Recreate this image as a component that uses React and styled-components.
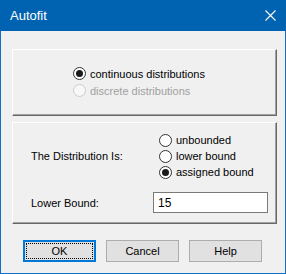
import React from "react";
import styled, { createGlobalStyle } from "styled-components";

const GlobalStyle = createGlobalStyle`
  html, body {
    margin: 0;
    padding: 0;
    background: #f0f0f0;
  }
  * {
    box-sizing: border-box;
  }
`;

const Window = styled.div`
  width: 286px;
  height: 274px;
  border: 1px solid #1170c4;
  border-top: none;
  background: #f0f0f0;
  font-family: "Liberation Sans", Arial, sans-serif;
  font-size: 11px;
  color: #000;
  display: flex;
  flex-direction: column;
`;

const TitleBar = styled.div`
  height: 31px;
  margin: 0 -1px;
  background: #0063b1;
  color: #fff;
  display: flex;
  align-items: center;
  justify-content: space-between;
  padding: 0 10px 0 10px;
`;

const Title = styled.span`
  font-size: 13px;
  line-height: 1;
  padding-bottom: 1px;
`;

const Body = styled.div`
  flex: 1;
  padding: 18px 0 0 11px;
  display: flex;
  flex-direction: column;
`;

// raised group box: light top/left, dark bottom/right
const Panel = styled.div`
  width: 265px;
  height: ${(p) => p.$h}px;
  border-top: 1px solid #fff;
  border-left: 1px solid #fff;
  border-right: 1px solid #696969;
  border-bottom: 1px solid #696969;
  box-shadow: inset -1px -1px 0 #a0a0a0;
  margin-bottom: ${(p) => p.$mb || 0}px;
`;

const ModePanel = styled(Panel)`
  padding: 15px 0 0 60px;
`;

const BoundPanel = styled(Panel)`
  padding: 9px 0 0 18px;
  display: grid;
  grid-template-columns: 122px 115px;
  grid-template-rows: 48px 21px;
  row-gap: 12px;
  align-items: center;
`;

const RadioList = styled.div`
  display: flex;
  flex-direction: column;
  margin-left: ${(p) => p.$indent || 0}px;
`;

const RadioRow = styled.div`
  height: ${(p) => p.$h || 16}px;
  display: flex;
  align-items: center;
  gap: 4px;
  color: ${(p) => (p.$disabled ? "#a0a0a0" : "#000")};
  white-space: nowrap;
`;

const RadioCircle = styled.span`
  width: 13px;
  height: 13px;
  border-radius: 50%;
  border: 1px solid ${(p) => (p.$disabled ? "#cccccc" : "#333")};
  background: ${(p) => (p.$disabled ? "#f7f7f7" : "#fff")};
  display: flex;
  align-items: center;
  justify-content: center;
  flex: none;

  &::after {
    content: "";
    width: 7px;
    height: 7px;
    border-radius: 50%;
    background: #1a1a1a;
    display: ${(p) => (p.$checked ? "block" : "none")};
  }
`;

const Label = styled.span`
  color: #000;
  white-space: nowrap;
`;

const TextBox = styled.div`
  width: 115px;
  height: 21px;
  border: 1px solid #7a7a7a;
  background: #fff;
  display: flex;
  align-items: center;
  padding-left: 4px;
  font-size: 12px;
`;

const ButtonRow = styled.div`
  display: flex;
  gap: 10px;
  padding-left: 11px;
  margin-top: 16px;
`;

const Button = styled.div`
  position: relative;
  width: 73px;
  height: 22px;
  background: #e1e1e1;
  border: ${(p) => (p.$default ? "2px solid #0078d7" : "1px solid #adadad")};
  display: flex;
  align-items: center;
  justify-content: center;
  font-size: 11px;

  &::after {
    content: "";
    position: absolute;
    inset: 1px;
    border: 1px dotted #000;
    display: ${(p) => (p.$default ? "block" : "none")};
  }
`;

const Radio = ({ label, checked, disabled, h }) => (
  <RadioRow $disabled={disabled} $h={h}>
    <RadioCircle $checked={checked} $disabled={disabled} />
    {label}
  </RadioRow>
);

export default function App() {
  return (
    <>
      <GlobalStyle />
      <Window>
        <TitleBar>
          <Title>Autofit</Title>
          <svg width="11" height="11" viewBox="0 0 11 11">
            <path d="M0.5 0.5 L10.5 10.5 M10.5 0.5 L0.5 10.5" stroke="#fff" strokeWidth="1.1" fill="none" />
          </svg>
        </TitleBar>
        <Body>
          <ModePanel $h={67} $mb={6}>
            <RadioList>
              <Radio label="continuous distributions" checked h={17} />
              <Radio label="discrete distributions" disabled h={17} />
            </RadioList>
          </ModePanel>
          <BoundPanel $h={102}>
            <Label>The Distribution Is:</Label>
            <RadioList $indent={6}>
              <Radio label="unbounded" />
              <Radio label="lower bound" />
              <Radio label="assigned bound" checked />
            </RadioList>
            <Label>Lower Bound:</Label>
            <TextBox>15</TextBox>
          </BoundPanel>
          <ButtonRow>
            <Button $default>OK</Button>
            <Button>Cancel</Button>
            <Button>Help</Button>
          </ButtonRow>
        </Body>
      </Window>
    </>
  );
}
